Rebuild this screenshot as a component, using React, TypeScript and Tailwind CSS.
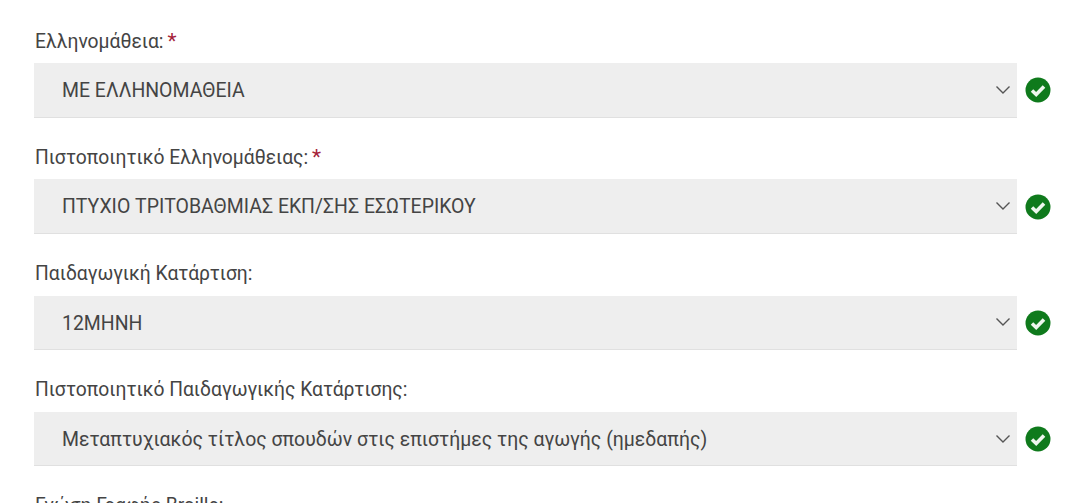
const fields = [
  { label: "Ελληνομάθεια:", required: true, value: "ΜΕ ΕΛΛΗΝΟΜΑΘΕΙΑ" },
  { label: "Πιστοποιητικό Ελληνομάθειας:", required: true, value: "ΠΤΥΧΙΟ ΤΡΙΤΟΒΑΘΜΙΑΣ ΕΚΠ/ΣΗΣ ΕΣΩΤΕΡΙΚΟΥ" },
  { label: "Παιδαγωγική Κατάρτιση:", required: false, value: "12ΜΗΝΗ" },
  {
    label: "Πιστοποιητικό Παιδαγωγικής Κατάρτισης:",
    required: false,
    value: "Μεταπτυχιακός τίτλος σπουδών στις επιστήμες της αγωγής (ημεδαπής)",
  },
];

const CheckBadge = () => (
  <svg width="26" height="26" viewBox="0 0 26 26" className="shrink-0">
    <circle cx="13" cy="13" r="12.5" fill="#0f7a1c" />
    <path d="M7 13.5 L11.2 17.5 L19 9.5" fill="none" stroke="#eef7ee" strokeWidth="3.6" />
  </svg>
);

const Chevron = () => (
  <svg width="16" height="10" viewBox="0 0 16 10" className="shrink-0">
    <path d="M1.5 1.5 L8 8 L14.5 1.5" fill="none" stroke="#555" strokeWidth="1.4" />
  </svg>
);

export default function App() {
  return (
    <div className="h-[503px] w-[1080px] overflow-hidden bg-white pl-[34px] pt-[28px] font-['Roboto',sans-serif] text-[#444444]">
      {fields.map((f) => (
        <div key={f.label} className="mb-[26.8px]">
          <div className="mb-[9px] h-[26px] pl-px text-[19.3px] leading-[26px]">
            {f.label}
            {f.required && <span className="ml-[4px] text-[21px] text-[#a5233a]">*</span>}
          </div>
          <div className="flex items-center gap-[8px]">
            <div className="flex h-[54.5px] w-[983px] items-center justify-between border-b border-[#e0e0e0] bg-[#eeeeee] pl-[28px]">
              <span className="pt-[2px] text-[19.44px]">{f.value}</span>
              <span className="flex w-[22px] justify-start">
                <Chevron />
              </span>
            </div>
            <CheckBadge />
          </div>
        </div>
      ))}
      <div className="h-[26px] pl-px text-[19.3px] leading-[26px]">Γνώση Γραφής Braille:</div>
    </div>
  );
}
